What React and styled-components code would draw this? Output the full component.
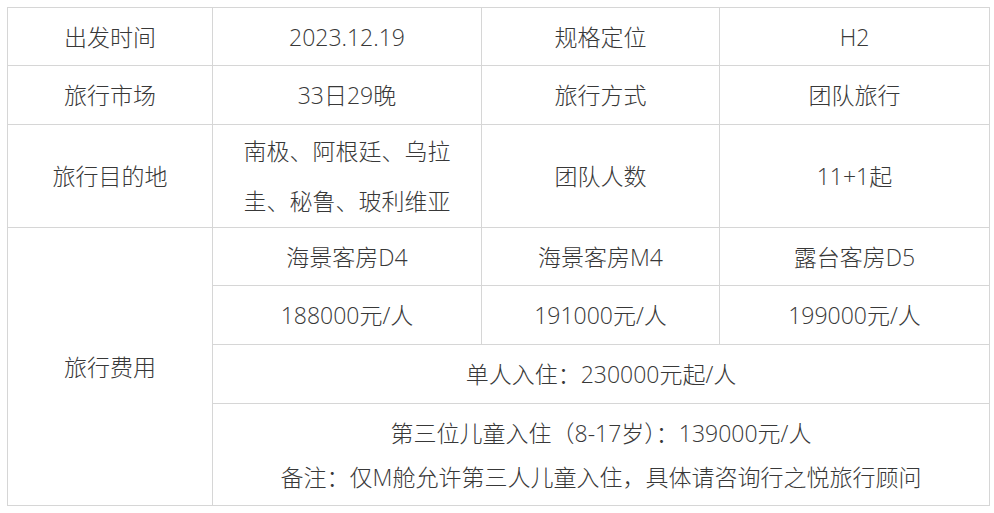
import React from "react";
import styled, { createGlobalStyle } from "styled-components";

const Global = createGlobalStyle`
  html, body { margin: 0; padding: 0; background: #ffffff; }
  body { font-family: "Open Sans", "Noto Sans CJK SC", sans-serif; }
`;

const Page = styled.div`
  padding: 7px 0 0 7px;
`;

const Table = styled.div`
  display: grid;
  grid-template-columns: 204px 268px 237px 269px;
  grid-template-rows: 57px 58px 102px 57px 58px 58px 101px;
  gap: 1px;
  padding: 1px;
  width: max-content;
  background: #d6d6d6;
`;

const Cell = styled.div`
  background: #ffffff;
  display: flex;
  flex-direction: column;
  align-items: center;
  justify-content: center;
  text-align: center;
  color: #383838;
  font-size: 23px;
  font-weight: 300;
  line-height: 30px;
  grid-column: ${(p) => p.$col || "auto"};
  grid-row: ${(p) => p.$row || "auto"};
`;

const Line = styled.div`
  line-height: ${(p) => p.$lh};
  white-space: nowrap;
`;

export default function App() {
  return (
    <>
      <Global />
      <Page>
        <Table>
          <Cell>出发时间</Cell>
          <Cell>2023.12.19</Cell>
          <Cell>规格定位</Cell>
          <Cell>H2</Cell>

          <Cell>旅行市场</Cell>
          <Cell>33日29晚</Cell>
          <Cell>旅行方式</Cell>
          <Cell>团队旅行</Cell>

          <Cell>旅行目的地</Cell>
          <Cell>
            <Line $lh="50px">南极、阿根廷、乌拉</Line>
            <Line $lh="50px">圭、秘鲁、玻利维亚</Line>
          </Cell>
          <Cell>团队人数</Cell>
          <Cell>11+1起</Cell>

          <Cell $col="1" $row="4 / span 4">旅行费用</Cell>
          <Cell>海景客房D4</Cell>
          <Cell>海景客房M4</Cell>
          <Cell>露台客房D5</Cell>

          <Cell>188000元/人</Cell>
          <Cell>191000元/人</Cell>
          <Cell>199000元/人</Cell>

          <Cell $col="2 / span 3">单人入住：230000元起/人</Cell>

          <Cell $col="2 / span 3">
            <Line $lh="44px">第三位儿童入住（8-17岁）：139000元/人</Line>
            <Line $lh="44px">备注：仅M舱允许第三人儿童入住，具体请咨询行之悦旅行顾问</Line>
          </Cell>
        </Table>
      </Page>
    </>
  );
}
